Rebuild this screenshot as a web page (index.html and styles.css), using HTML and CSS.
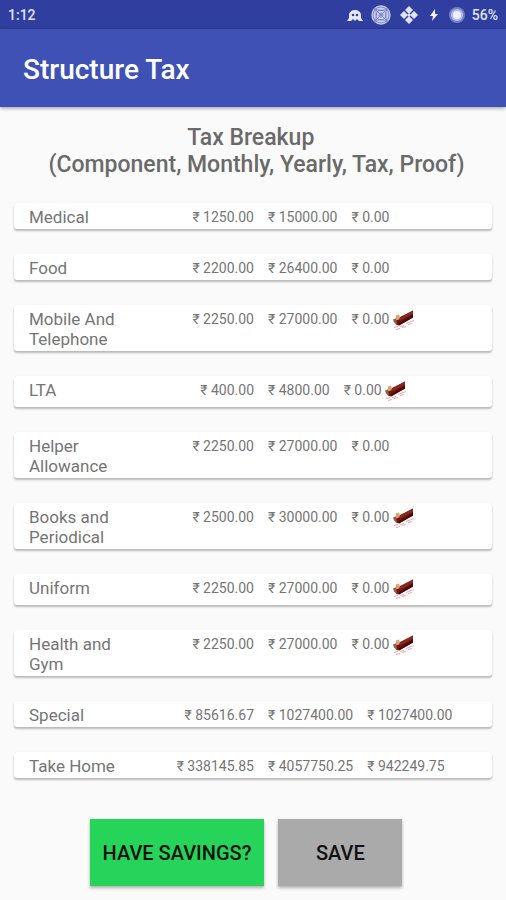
FILE: index.html
```
<!DOCTYPE html>
<html lang="en">
<head>
    <meta charset="UTF-8">
    <meta name="viewport" content="width=device-width, initial-scale=1.0">
    <title>Structure Tax</title>
    <link rel="stylesheet" href="styles.css">
</head>
<body>
    <!-- stamp shown on components that need a proof -->
    <svg class="defs" width="0" height="0" aria-hidden="true">
        <symbol id="stamp" viewBox="0 0 24 24">
            <path d="M2 10l3-1 16-8v7L7 16l-3-1z" fill="#6d1512"/>
            <path d="M7 9l14-8v3L8 11z" fill="#8a2a1f"/>
            <path d="M4 6l3-1 1 3-1 2-3 1-2 1 2-4z" fill="#d2a873"/>
            <path d="M1 10l3-1 1 6-3-2z" fill="#a8553f"/>
            <path d="M7 14l14-9v3L7 16z" fill="#4a0a0b"/>
            <path d="M2 18l4-1M8 17l4-1M14 14l8-3M4 20l4-1M10 18l4-1M16 15l4-1" fill="none" stroke="#efa3ab"/>
        </symbol>
    </svg>

    <div class="statusbar">
        <span class="time">1:12</span>
        <div class="icons">
            <svg class="ghost" width="16" height="12" viewBox="0 0 16 12">
                <path d="M2 9V6a6 5 0 0 1 12 0v3l2 3h-4l-2-2-2 2-2-2-2 2H0z" fill="#e6eaff"/>
                <circle cx="6" cy="6" r="1.3" fill="#303f9f"/>
                <circle cx="10" cy="6" r="1.3" fill="#303f9f"/>
            </svg>
            <svg class="mandala" width="20" height="20" viewBox="0 0 20 20">
                <circle cx="10" cy="10" r="9.7" fill="#cbd0ee"/>
                <g fill="none" stroke="#7d88c8">
                    <circle cx="10" cy="10" r="8"/>
                    <circle cx="10" cy="10" r="5"/>
                    <circle cx="10" cy="10" r="2"/>
                    <path d="M3 3q7 5 14 0q-5 7 0 14q-7-5-14 0q5-7 0-14zM5 5l10 10M15 5L5 15"/>
                </g>
            </svg>
            <svg class="diamonds" width="20" height="20" viewBox="0 0 20 20" fill="#dfe4ff">
                <path d="M10 1l4 4-4 4-4-4zM10 11l4 4-4 4-4-4zM5 6l4 4-4 4-4-4zM15 6l4 4-4 4-4-4z"/>
                <circle cx="10" cy="10" r="1.5"/>
            </svg>
            <svg class="bolt" width="8" height="12" viewBox="0 0 8 12">
                <path d="M5 0L0 7h3l-1 5 6-7H5z" fill="#f4f6ff"/>
            </svg>
            <svg class="battery" width="16" height="16" viewBox="0 0 16 16">
                <circle cx="8" cy="8" r="8" fill="#7480c6"/>
                <circle cx="8" cy="8" r="6" fill="#b4bdea"/>
                <circle cx="8" cy="8" r="4" fill="#edf0ff"/>
            </svg>
        </div>
        <span class="percent">56%</span>
    </div>

    <header class="appbar">
        <h1>Structure Tax</h1>
    </header>

    <main>
        <h2>Tax Breakup&nbsp;&nbsp;<br>(Component, Monthly, Yearly, Tax, Proof)</h2>

        <table class="breakup">
            <tbody>
                <tr>
                    <th scope="row">Medical</th>
                    <td class="monthly">₹ 1250.00</td>
                    <td>₹ 15000.00</td>
                    <td>₹ 0.00</td>
                </tr>
                <tr>
                    <th scope="row">Food</th>
                    <td class="monthly">₹ 2200.00</td>
                    <td>₹ 26400.00</td>
                    <td>₹ 0.00</td>
                </tr>
                <tr>
                    <th scope="row">Mobile And Telephone</th>
                    <td class="monthly">₹ 2250.00</td>
                    <td>₹ 27000.00</td>
                    <td>₹ 0.00</td>
                    <td class="proof"><svg><use href="#stamp"/></svg></td>
                </tr>
                <tr>
                    <th scope="row">LTA</th>
                    <td class="monthly">₹ 400.00</td>
                    <td>₹ 4800.00</td>
                    <td>₹ 0.00</td>
                    <td class="proof"><svg><use href="#stamp"/></svg></td>
                </tr>
                <tr>
                    <th scope="row">Helper Allowance</th>
                    <td class="monthly">₹ 2250.00</td>
                    <td>₹ 27000.00</td>
                    <td>₹ 0.00</td>
                </tr>
                <tr>
                    <th scope="row">Books and Periodical</th>
                    <td class="monthly">₹ 2500.00</td>
                    <td>₹ 30000.00</td>
                    <td>₹ 0.00</td>
                    <td class="proof"><svg><use href="#stamp"/></svg></td>
                </tr>
                <tr>
                    <th scope="row">Uniform</th>
                    <td class="monthly">₹ 2250.00</td>
                    <td>₹ 27000.00</td>
                    <td>₹ 0.00</td>
                    <td class="proof"><svg><use href="#stamp"/></svg></td>
                </tr>
                <tr>
                    <th scope="row">Health and Gym</th>
                    <td class="monthly">₹ 2250.00</td>
                    <td>₹ 27000.00</td>
                    <td>₹ 0.00</td>
                    <td class="proof"><svg><use href="#stamp"/></svg></td>
                </tr>
                <tr>
                    <th scope="row">Special</th>
                    <td class="monthly">₹ 85616.67</td>
                    <td>₹ 1027400.00</td>
                    <td>₹ 1027400.00</td>
                </tr>
                <tr>
                    <th scope="row">Take Home</th>
                    <td class="monthly">₹ 338145.85</td>
                    <td>₹ 4057750.25</td>
                    <td>₹ 942249.75</td>
                </tr>
            </tbody>
        </table>

        <div class="actions">
            <button type="button" class="savings">HAVE SAVINGS?</button>
            <button type="button" class="save">SAVE</button>
        </div>
    </main>
</body>
</html>
```
FILE: styles.css
```
* {
    box-sizing: border-box;
}

body {
    margin: 0;
    font-family: Roboto, "Noto Sans", sans-serif;
    background-color: #fafafa;
    color: #757575;
}

.defs {
    position: absolute;
}

.statusbar {
    display: flex;
    align-items: center;
    height: 29px;
    padding: 0 8px;
    background-color: #303f9f;
    color: #dfe4ff;
    font-size: 14px;
    font-weight: 500;
}

.icons {
    display: flex;
    align-items: center;
    gap: 8px;
    margin-left: auto;
    margin-right: 7px;
}

.bolt {
    margin: 0 3px;
}

.appbar {
    display: flex;
    align-items: center;
    height: 78px;
    padding: 2px 23px 0;
    background-color: #3f51b5;
    color: #ffffff;
    box-shadow: 0 1px 4px rgba(0, 0, 0, 0.4);
}

h1 {
    margin: 0;
    font-size: 28px;
    font-weight: 500;
}

main {
    padding: 17px 14px;
}

h2 {
    margin: 0 0 25px;
    padding-left: 7px;
    font-size: 23px;
    font-weight: 500;
    line-height: 27px;
    text-align: center;
    color: #6a6a6a;
}

/* every row of the table is drawn as a card */
.breakup {
    display: block;
}

.breakup tbody {
    display: flex;
    flex-direction: column;
    gap: 25px;
}

.breakup tr {
    display: flex;
    align-items: flex-start;
    padding: 4px 15px 2px;
    background-color: #ffffff;
    border-radius: 3px;
    box-shadow: 0 2px 2px rgba(0, 0, 0, 0.25), 0 0 1px rgba(0, 0, 0, 0.1);
}

.breakup th {
    flex: none;
    width: 112px;
    padding: 0;
    font-size: 17px;
    font-weight: 400;
    line-height: 20px;
    text-align: left;
}

.breakup td {
    padding: 0 0 0 14px;
    font-size: 14px;
    line-height: 20px;
    white-space: nowrap;
}

.breakup .monthly {
    width: 113px;
    padding: 0;
    text-align: right;
}

.breakup .proof {
    padding: 0 0 0 2px;
}

.proof svg {
    display: block;
    width: 24px;
    height: 25px;
}

.actions {
    display: flex;
    justify-content: center;
    gap: 14px;
    margin-top: 41px;
    padding-right: 14px;
}

button {
    height: 67px;
    border: none;
    padding: 0 13px;
    font-family: inherit;
    font-size: 20px;
    font-weight: 500;
    color: #111111;
    cursor: pointer;
    box-shadow: 0 2px 3px rgba(0, 0, 0, 0.3);
}

.savings {
    background-color: #26d45a;
}

.save {
    min-width: 124px;
    background-color: #aaaaaa;
}
```
